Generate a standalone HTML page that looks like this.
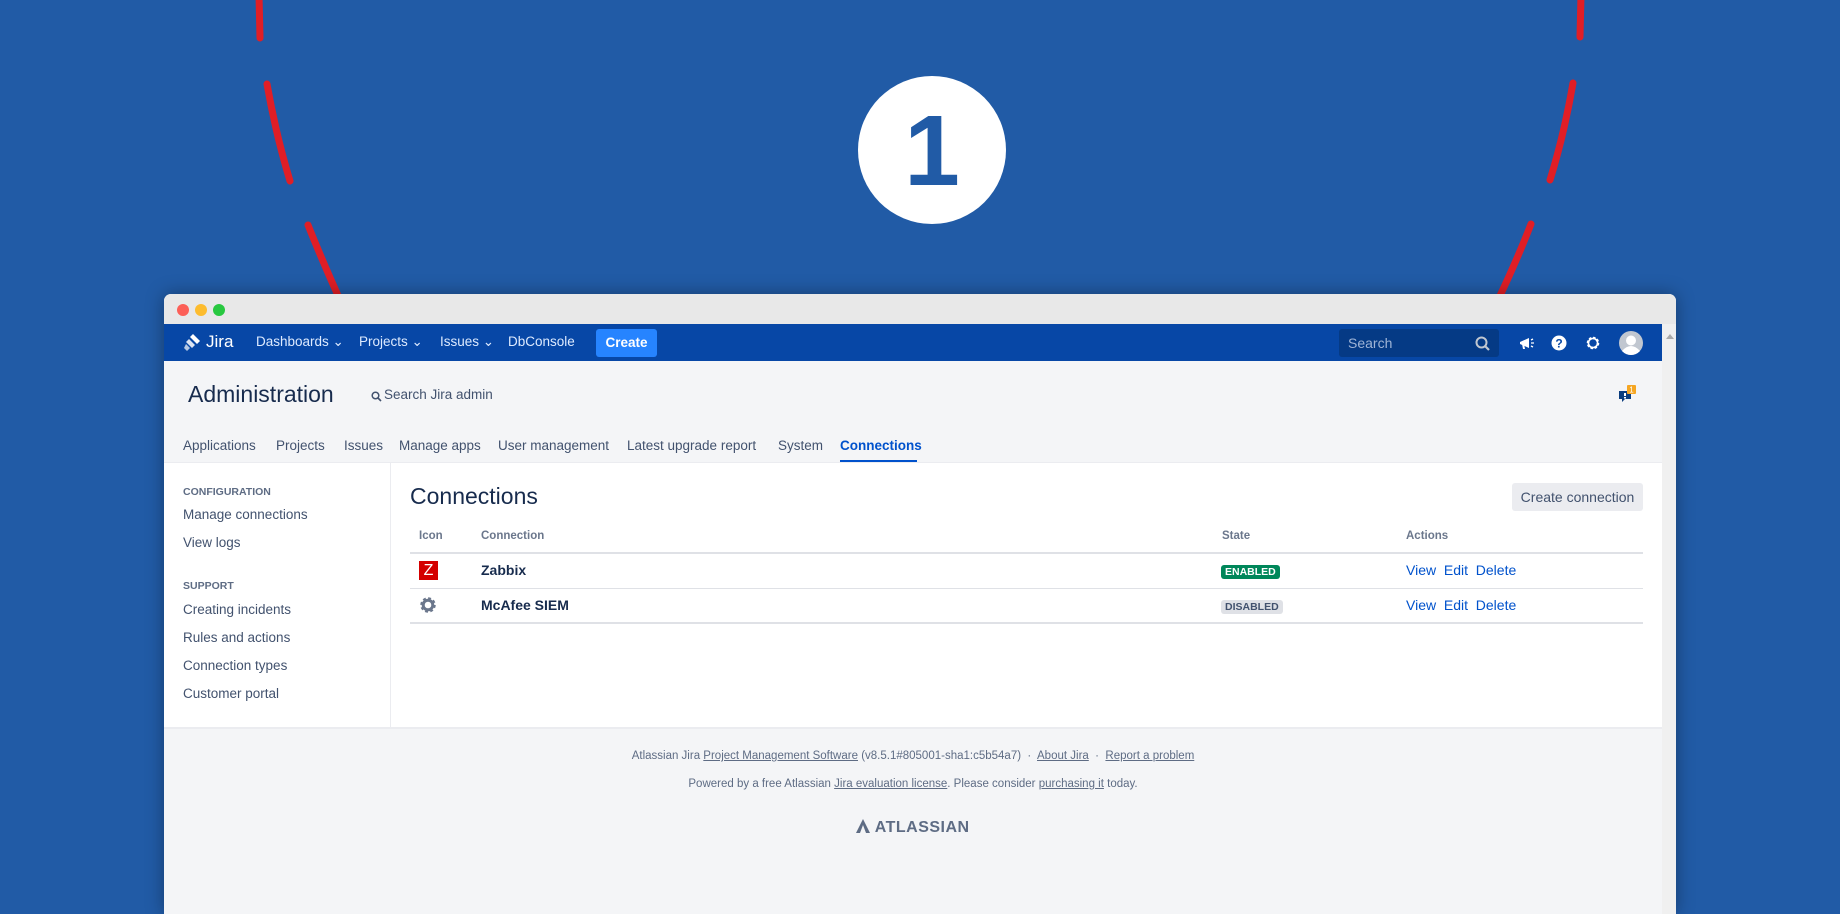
<!DOCTYPE html>
<html><head><meta charset="utf-8"><style>
*{margin:0;padding:0;box-sizing:border-box}
body{width:1840px;height:900px;overflow:hidden;background:#215ba6;font-family:"Liberation Sans",sans-serif;position:relative}
.a{position:absolute;white-space:nowrap}
.win{position:absolute;left:164px;top:294px;width:1512px;height:620px;background:#f4f5f7;border-radius:7px 7px 0 0;box-shadow:0 0 18px rgba(0,0,0,.35);overflow:hidden}
.tb{position:absolute;left:0;top:0;width:1512px;height:30px;background:#e8e8e8}
.dot{position:absolute;top:10px;width:12px;height:12px;border-radius:50%}
.nav{position:absolute;left:0;top:30px;width:1498px;height:37px;background:#0747a6;color:#fff;font-size:13.5px}
.nav .a{top:10px;color:#deebff}
.tabs .a{top:144px;font-size:13.5px;color:#42526e}
.side .a{left:19px;font-size:13.5px;color:#42526e}
.side .h{font-size:10.5px;font-weight:bold;color:#5e6c84}
.th{top:236px;font-size:11.5px;font-weight:bold;color:#6b778c}
.ln{position:absolute;left:246px;width:1233px;background:#dfe1e6}
.lk{color:#0052cc;font-size:14px}
.ft{font-size:11.5px;color:#5e6c84;left:0;width:1498px;text-align:center}
.ft u{color:#5e6c84}
</style></head><body>
<svg class="a" style="left:0;top:0" width="1840" height="300">
<g stroke="#e01e26" stroke-width="7" stroke-linecap="round" fill="none">
<path d="M259 -5 L260 38"/><path d="M267 84 Q276 135 290 181"/><path d="M308 225 Q322 260 340 300"/>
<path d="M1581 -5 L1580 37"/><path d="M1573 83 Q1564 135 1550 180"/><path d="M1531 224 Q1517 260 1498 300"/>
</g>
<circle cx="932" cy="150" r="74" fill="#fff"/>
<text x="932" y="185" text-anchor="middle" font-family="Liberation Sans" font-weight="bold" font-size="100" fill="#215ba6">1</text>
</svg>
<div class="win">
<div class="tb"><div class="dot" style="left:13px;background:#fc5f57"></div><div class="dot" style="left:31px;background:#fdbc2e"></div><div class="dot" style="left:49px;background:#28c840"></div></div>
<div style="position:absolute;left:1498px;top:30px;width:14px;height:600px;background:#f0f0f0"></div>
<div class="a" style="left:1502px;top:36px;width:0;height:0;border:4px solid transparent;border-bottom:5px solid #aaa"></div>
<div class="nav">
<svg class="a" style="left:19px;top:9px" width="20" height="20" viewBox="0 0 20 20"><g fill="#fff"><path d="M10 1l7 7-3 3-7-7z"/><path d="M6 6l6 6-3 3-6-6z" opacity=".85"/><path d="M3 11l4 4-3 3-3-3z" opacity=".7"/></g></svg>
<div class="a" style="left:42px;top:8px;font-size:17px;color:#fff">Jira</div>
<div class="a" style="left:92px">Dashboards ⌄</div>
<div class="a" style="left:195px">Projects ⌄</div>
<div class="a" style="left:276px">Issues ⌄</div>
<div class="a" style="left:344px">DbConsole</div>
<div class="a" style="left:432px;top:5px;width:61px;height:28px;background:#2684ff;border-radius:3px;color:#fff;font-weight:bold;text-align:center;line-height:28px">Create</div>
<div class="a" style="left:1175px;top:5px;width:160px;height:28px;background:#053a85;border-radius:3px;color:#9fb4d6;padding:6px 9px;font-size:14px">Search</div>
<svg class="a" style="left:1311px;top:12px" width="16" height="16"><circle cx="6.5" cy="6.5" r="5" stroke="#c1c7d0" stroke-width="2" fill="none"/><path d="M10 10l4 4" stroke="#c1c7d0" stroke-width="2.2"/></svg>
<svg class="a" style="left:1354px;top:11px" width="18" height="16"><path d="M2 7l9-4v10L2 9z" fill="#fff"/><path d="M4 9l1 5h2l-1-5z" fill="#fff"/><path d="M13 5l2-1M13 8h3M13 11l2 1" stroke="#fff" stroke-width="1.3"/></svg>
<svg class="a" style="left:1387px;top:11px" width="16" height="16"><circle cx="8" cy="8" r="7.5" fill="#fff"/><text x="8" y="12.5" text-anchor="middle" font-size="12" font-weight="bold" fill="#0747a6" font-family="Liberation Sans">?</text></svg>
<svg class="a" style="left:1421px;top:11px" width="16" height="16" viewBox="0 0 16 16"><circle cx="8" cy="8" r="5" stroke="#fff" stroke-width="2.6" fill="none" stroke-dasharray="2.3 1.6"/><circle cx="8" cy="8" r="4.6" stroke="#fff" stroke-width="1.6" fill="none"/></svg>
<svg class="a" style="left:1455px;top:7px" width="24" height="24"><circle cx="12" cy="12" r="12" fill="#c1c7d0"/><circle cx="12" cy="9.5" r="5" fill="#fff"/><path d="M3 20q9-10 18 0q-4 4-9 4t-9-4z" fill="#fff"/></svg>
</div>
<div class="a" style="left:24px;top:87px;font-size:23px;color:#172b4d">Administration</div>
<svg class="a" style="left:207px;top:97px" width="11" height="11"><circle cx="4.5" cy="4.5" r="3.3" stroke="#42526e" stroke-width="1.5" fill="none"/><path d="M7 7l3 3" stroke="#42526e" stroke-width="1.6"/></svg>
<div class="a" style="left:220px;top:93px;font-size:13.5px;color:#42526e">Search Jira admin</div>
<svg class="a" style="left:1454px;top:90px" width="22" height="22"><path d="M1 7h12v8H7l-3 3v-3H1z" fill="#0a3d7e"/><rect x="6" y="9" width="2" height="3" fill="#fff"/><rect x="6" y="13" width="2" height="1.5" fill="#fff"/><rect x="9" y="1" width="9" height="9" rx="1" fill="#f5a623"/><text x="13.5" y="8.5" text-anchor="middle" font-size="8" fill="#fff" font-family="Liberation Sans">1</text></svg>
<div class="tabs">
<div class="a" style="left:19px">Applications</div><div class="a" style="left:112px">Projects</div><div class="a" style="left:180px">Issues</div><div class="a" style="left:235px">Manage apps</div><div class="a" style="left:334px">User management</div><div class="a" style="left:463px">Latest upgrade report</div><div class="a" style="left:614px">System</div><div class="a" style="left:676px;color:#0052cc;font-weight:bold">Connections</div>
<div class="a" style="left:676px;top:166px;width:77px;height:2px;background:#0052cc"></div>
</div>
<div class="a" style="left:0;top:168px;width:1498px;height:267px;background:#fff;border-top:1px solid #ebecf0;border-bottom:2px solid #ebecf0"></div>
<div class="a" style="left:226px;top:169px;width:1px;height:265px;background:#ebecf0"></div>
<div class="side">
<div class="a h" style="top:192px">CONFIGURATION</div>
<div class="a" style="top:213px">Manage connections</div>
<div class="a" style="top:241px">View logs</div>
<div class="a h" style="top:286px">SUPPORT</div>
<div class="a" style="top:308px">Creating incidents</div>
<div class="a" style="top:336px">Rules and actions</div>
<div class="a" style="top:364px">Connection types</div>
<div class="a" style="top:392px">Customer portal</div>
</div>
<div class="a" style="left:246px;top:189px;font-size:23px;color:#172b4d">Connections</div>
<div class="a" style="left:1348px;top:189px;width:131px;height:28px;background:#ebecf0;border-radius:3px;font-size:14px;color:#42526e;text-align:center;line-height:28px">Create connection</div>
<div class="a th" style="left:255px">Icon</div><div class="a th" style="left:317px">Connection</div><div class="a th" style="left:1058px">State</div><div class="a th" style="left:1242px">Actions</div>
<div class="ln" style="top:258px;height:2px"></div>
<div class="ln" style="top:294px;height:1px"></div>
<div class="ln" style="top:328px;height:2px"></div>
<div class="a" style="left:255px;top:267px;width:19px;height:19px;background:#d40000;color:#fff;font-size:16px;text-align:center;line-height:19px">Z</div>
<div class="a" style="left:317px;top:268px;font-size:14px;font-weight:bold;color:#172b4d">Zabbix</div>
<svg class="a" style="left:255px;top:302px" width="18" height="18" viewBox="0 0 18 18"><circle cx="9" cy="9" r="6" stroke="#6b778c" stroke-width="3.5" fill="none" stroke-dasharray="2.6 2.1"/><circle cx="9" cy="9" r="4.8" stroke="#6b778c" stroke-width="3" fill="none"/></svg>
<div class="a" style="left:317px;top:303px;font-size:14px;font-weight:bold;color:#172b4d">McAfee SIEM</div>
<div class="a" style="left:1057px;top:271px;padding:1px 4px;background:#00875a;color:#fff;font-size:10.5px;font-weight:bold;border-radius:3px">ENABLED</div>
<div class="a" style="left:1057px;top:306px;padding:1px 4px;background:#dfe1e6;color:#42526e;font-size:10.5px;font-weight:bold;border-radius:3px">DISABLED</div>
<div class="a lk" style="left:1242px;top:268px">View&nbsp;&nbsp;Edit&nbsp;&nbsp;Delete</div>
<div class="a lk" style="left:1242px;top:303px">View&nbsp;&nbsp;Edit&nbsp;&nbsp;Delete</div>
<div class="a ft" style="top:456px">Atlassian Jira <u>Project Management Software</u> (v8.5.1#805001-sha1:c5b54a7) &nbsp;·&nbsp; <u>About Jira</u> &nbsp;·&nbsp; <u>Report a problem</u></div>
<div class="a ft" style="top:484px">Powered by a free Atlassian <u>Jira evaluation license</u>. Please consider <u>purchasing it</u> today.</div>
<div class="a ft" style="top:525px;font-size:16px;font-weight:bold;color:#5e6c84;letter-spacing:.5px"><svg width="14" height="14" style="vertical-align:-1px"><path d="M7 0L14 14H10L7 6L4 14H0z" fill="#5e6c84"/></svg> ATLASSIAN</div>
</div>
</body></html>
